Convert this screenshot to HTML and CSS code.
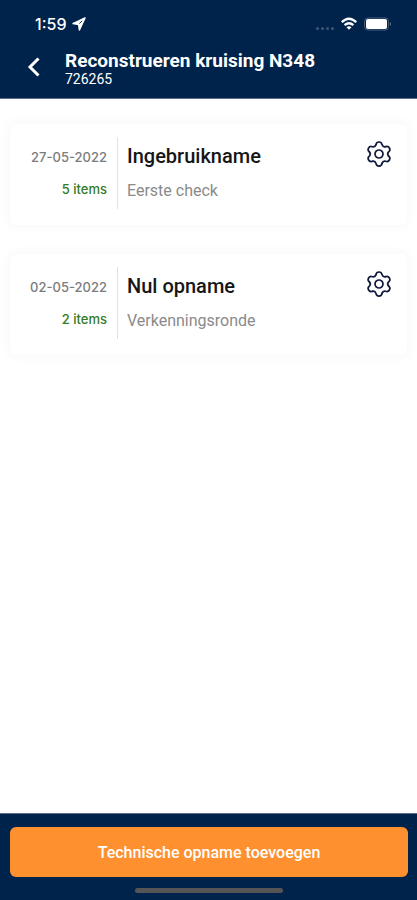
FILE: index.html
```html
<!DOCTYPE html>
<html lang="nl">
<head>
<meta charset="utf-8">
<meta name="viewport" content="width=device-width, initial-scale=1">
<title>Reconstrueren kruising N348</title>
<link rel="stylesheet" href="styles.css">
</head>
<body>
<svg class="defs" aria-hidden="true">
  <defs>
    <path id="tooth" d="M-3-9.4C-2.5-12.9 2.5-12.9 3-9.4Q3.8-6.7 6.6-7.3"/>
    <g id="gear">
      <use href="#tooth"/>
      <use href="#tooth" transform="rotate(60)"/>
      <use href="#tooth" transform="rotate(120)"/>
      <use href="#tooth" transform="rotate(180)"/>
      <use href="#tooth" transform="rotate(240)"/>
      <use href="#tooth" transform="rotate(300)"/>
      <circle r="4"/>
    </g>
  </defs>
</svg>
<header class="header">
  <div class="status">
    <span class="time">1:59</span>
    <svg class="location" width="14" height="14" viewBox="0 0 14 14"><path d="M13 1 1 6.6 6.6 7.4 7.4 13Z" fill="#fff" stroke="#fff" stroke-width="1.5" stroke-linejoin="round"/><path d="M10.2 3.8 7.4 6.6" stroke="#00234c"/></svg>
    <span class="dots"><i></i><i></i><i></i><i></i></span>
    <svg class="wifi" width="18" height="14" viewBox="0 0 18 14" fill="none" stroke="#fff" stroke-width="2.4"><path d="M1.8 5.2Q9-1.6 16.2 5.2M4.6 8.2Q9 4.2 13.4 8.2"/><path d="M6.5 10.2Q9 8.2 11.5 10.2L9 12.8Z" fill="#fff" stroke="none"/></svg>
    <svg class="battery" width="28" height="14" viewBox="0 0 28 14"><rect x=".5" y="1" width="24" height="12" rx="3.5" fill="none" stroke="#4a617e"/><rect x="2" y="2" width="21" height="10" rx="2" fill="#fff"/><path d="M26 5Q28 7 26 9Z" fill="#687b95"/></svg>
  </div>
  <div class="bar">
    <button class="back" aria-label="Terug"><svg width="14" height="20" viewBox="0 0 14 20" fill="none" stroke="#fff" stroke-width="3"><path d="M11.5 1.5 3 10 11.5 18.5"/></svg></button>
    <div>
      <h1 class="title">Reconstrueren kruising N348</h1>
      <p class="number">726265</p>
    </div>
  </div>
</header>
<main class="list">
  <article class="card">
    <div class="meta"><time class="date" datetime="2022-05-27">27-05-2022</time><span class="count">5 items</span></div>
    <div class="info"><h2 class="name">Ingebruikname</h2><p class="note">Eerste check</p></div>
    <button class="settings" aria-label="Instellingen Ingebruikname"><svg width="28" height="28" viewBox="-14 -14 28 28"><use href="#gear"/></svg></button>
  </article>
  <article class="card">
    <div class="meta"><time class="date" datetime="2022-05-02">02-05-2022</time><span class="count">2 items</span></div>
    <div class="info"><h2 class="name">Nul opname</h2><p class="note">Verkenningsronde</p></div>
    <button class="settings" aria-label="Instellingen Nul opname"><svg width="28" height="28" viewBox="-14 -14 28 28"><use href="#gear"/></svg></button>
  </article>
</main>
<footer class="footer">
  <button class="add">Technische opname toevoegen</button>
  <div class="home"></div>
</footer>
</body>
</html>
```
FILE: styles.css
```css
* { box-sizing: border-box; }
body {
  margin: 0;
  min-height: 100vh;
  display: flex;
  flex-direction: column;
  background: #fff;
  font-family: Roboto, "Liberation Sans", sans-serif;
}
h1, h2, p { margin: 0; }
button { border: 0; padding: 0; background: none; font: inherit; cursor: pointer; }
svg { display: block; }
.defs { position: absolute; width: 0; height: 0; }

.header {
  background: #00234c;
  color: #fff;
  border-bottom: 1px solid #60708a;
  padding-bottom: 12px;
}
.status {
  display: flex;
  align-items: center;
  height: 48px;
  padding: 0 25px 0 35px;
}
.time { font: 500 16px/20px Inter, sans-serif; }
.location { margin-left: 6px; }
.dots { display: flex; gap: 2px; margin: 8px 6px 0 auto; }
.dots i { width: 3px; height: 3px; border-radius: 50%; background: #3d5674; }
.wifi { margin-right: 6px; }
.bar { display: flex; align-items: center; padding-left: 27px; }
.back { width: 38px; }
.title { font-size: 19px; line-height: 22px; font-weight: 700; margin-top: 2px; }
.number { font-size: 14px; line-height: 14px; }

.list {
  flex: 1;
  display: flex;
  flex-direction: column;
  gap: 29px;
  padding: 25px 10px;
}
.card {
  display: flex;
  align-items: flex-start;
  padding: 13px 14px 16px 16px;
  border-radius: 6px;
  background: #fff;
  box-shadow: 0 0 12px 2px rgba(0, 0, 0, 0.03);
}
.meta {
  width: 92px;
  height: 72px;
  display: flex;
  flex-direction: column;
  align-items: flex-end;
  gap: 12px;
  padding: 10px 10px 0 0;
  border-right: 1px solid #e2e2e2;
  font-family: Inter, sans-serif;
  font-size: 13px;
  line-height: 20px;
  font-weight: 500;
}
.date { color: #7c7c7c; }
.count { color: #367a24; }
.info { flex: 1; padding: 6px 0 0 9px; }
.name { font-size: 20px; line-height: 26px; font-weight: 500; color: #161616; }
.note { margin-top: 12px; font-size: 16px; line-height: 20px; color: #8a8a8a; }
.settings { margin-top: 3px; }
.settings svg { fill: none; stroke: #111a3a; stroke-width: 1.7; stroke-linecap: round; }

.footer {
  background: #00234c;
  border-top: 1px solid #60708a;
  padding: 13px 9px 7px 10px;
}
.add {
  width: 100%;
  height: 50px;
  border-radius: 6px;
  background: #ff9030;
  color: #fff;
  font-size: 16px;
  font-weight: 500;
}
.home { width: 37%; height: 5px; margin: 11px auto 0; border-radius: 3px; background: #555; }
```
